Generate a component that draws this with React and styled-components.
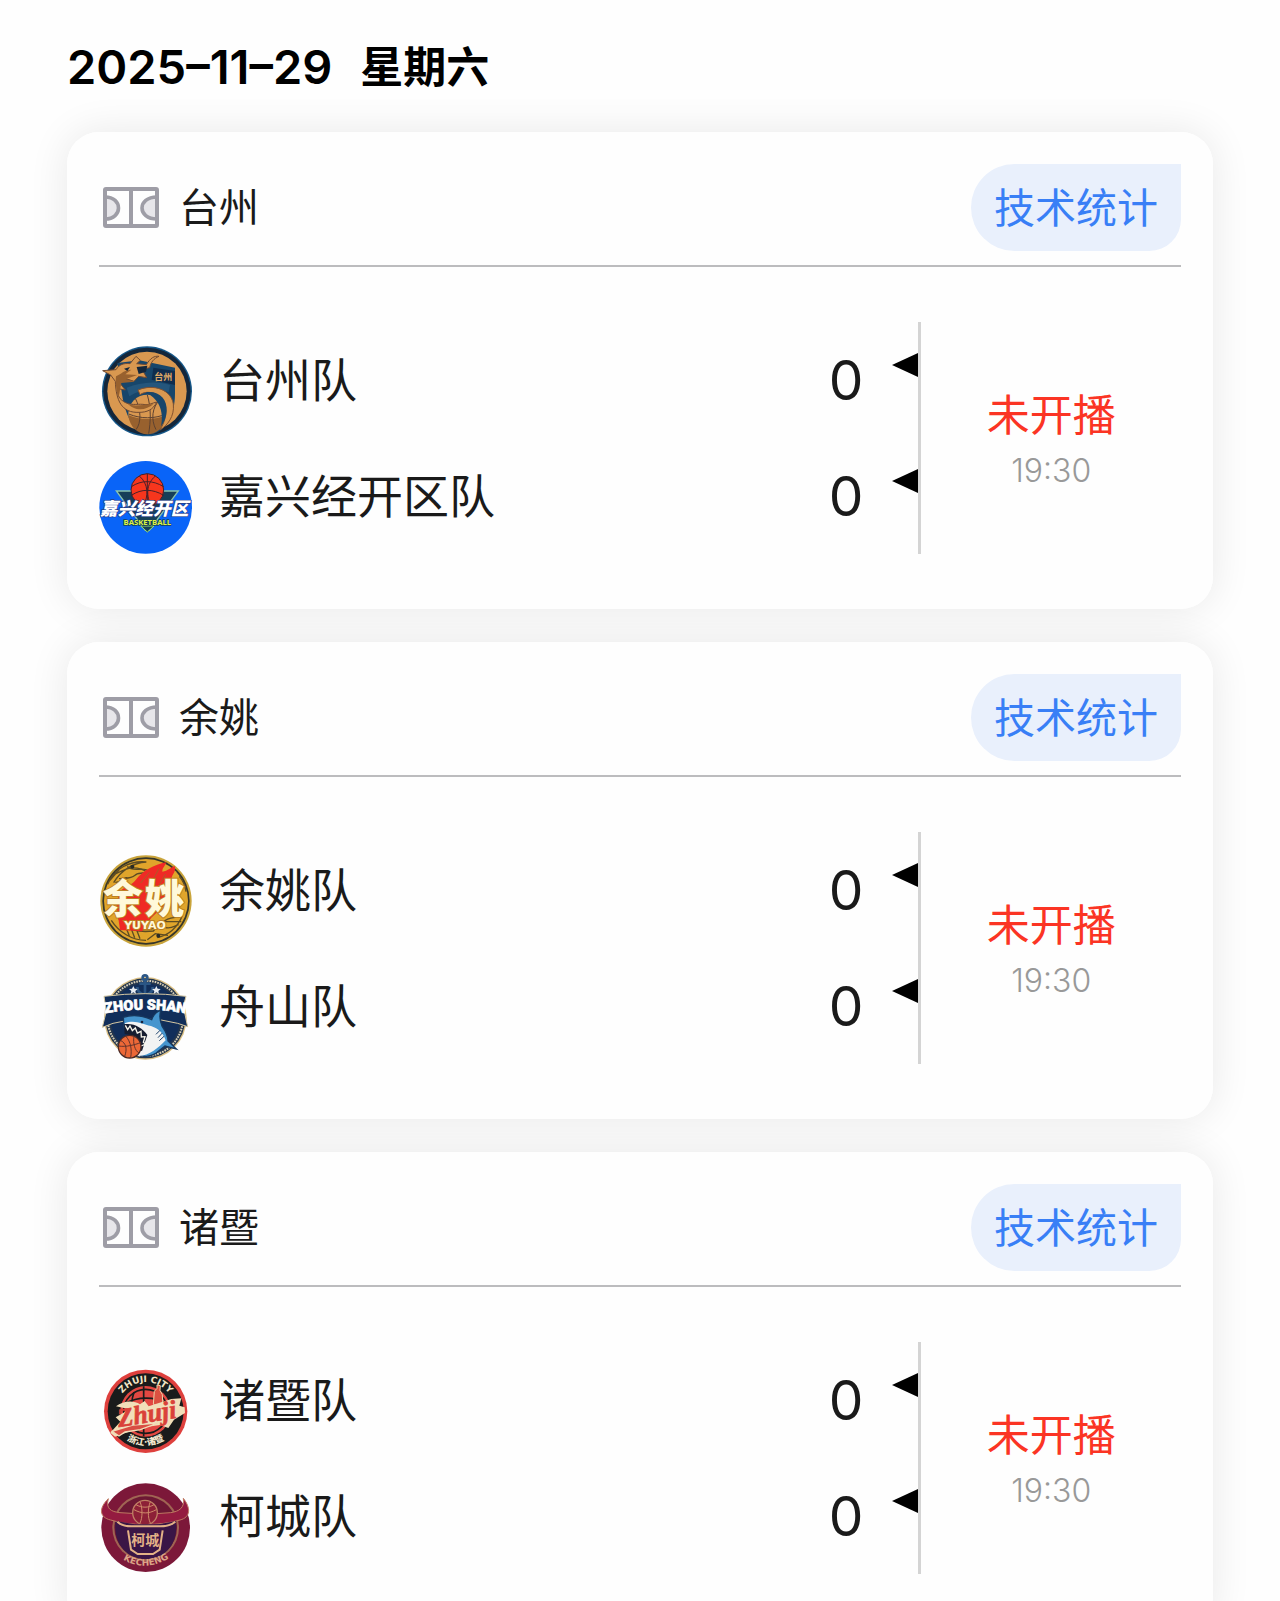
import React from 'react';
import styled, { createGlobalStyle } from 'styled-components';

const GlobalStyle = createGlobalStyle`
  * {
    box-sizing: border-box;
  }

  body {
    margin: 0;
    background: #fefefe;
    color: #1a1a1a;
    font-family: Inter, 'Noto Sans CJK SC', sans-serif;
  }
`;

const Page = styled.main`
  padding: 38px 67px 33px;
`;

const DateHeading = styled.h1`
  display: flex;
  align-items: center;
  gap: 28px;
  margin: 0 0 36px;
  color: #000;
  font-size: 43px;
  font-weight: 600;
  line-height: 58px;
`;

const Day = styled.time`
  font-size: 47px;
  font-weight: 600;
`;

const MatchList = styled.section`
  display: flex;
  flex-direction: column;
  gap: 33px;
  isolation: isolate;
`;

const Card = styled.article`
  position: relative;
  padding: 32px 32px 55px;
  border-radius: 32px;
  background: #fefefe;

  /* keeps the shadow under the neighbouring cards */
  &::before {
    content: '';
    position: absolute;
    inset: 0;
    z-index: -1;
    border-radius: inherit;
    box-shadow: 0 0 40px rgba(0, 0, 0, 0.09);
  }
`;

const CardHeader = styled.header`
  display: flex;
  align-items: center;
  padding-bottom: 14px;
  border-bottom: 2px solid #bcbcbe;
`;

const CourtIcon = styled.svg`
  width: 64px;
  height: 44px;
`;

const Venue = styled.h2`
  flex: 1;
  margin: 0 0 0 16px;
  font-size: 40px;
  font-weight: 400;
  line-height: 56px;
`;

const StatsButton = styled.button`
  height: 87px;
  padding: 0 23px 6px;
  border: 0;
  border-radius: 44px 0 32px 44px;
  background: #e9f0fc;
  color: #397ff6;
  font: inherit;
  font-size: 41px;
  cursor: pointer;
`;

const MatchBody = styled.div`
  display: flex;
  margin-top: 55px;
`;

const Teams = styled.ul`
  flex: 1;
  margin: 0;
  padding: 0;
  border-right: 3px solid #d4d4d4;
  list-style: none;
`;

const TeamRow = styled.li`
  display: flex;
  align-items: center;
  height: 116px;
`;

const Logo = styled.svg`
  align-self: flex-end;
  width: 93px;
  height: 93px;
  overflow: visible;
`;

const TeamName = styled.span`
  flex: 1;
  margin-left: 27px;
  font-size: 46px;
  line-height: 62px;
`;

const Score = styled.span`
  font-size: 55px;
  line-height: 64px;
`;

const Pointer = styled.i`
  align-self: flex-start;
  margin: 31px 0 0 29px;
  border: solid transparent;
  border-width: 12px 26px 12px 0;
  border-right-color: #000;
`;

const Status = styled.div`
  flex: 0 0 24%;
  display: flex;
  flex-direction: column;
  justify-content: center;
  align-items: center;
  padding-top: 6px;
`;

const StatusText = styled.span`
  color: #fb3424;
  font-size: 43px;
  line-height: 60px;
`;

const StartTime = styled.time`
  color: #999;
  font-size: 32px;
  font-weight: 300;
  line-height: 52px;
`;

const Court = () => (
  <CourtIcon viewBox="0 0 64 44" fill="none" stroke="#9e9da6" strokeWidth="4" aria-hidden="true">
    <path d="M6 11c18 0 18 22 0 22zM58 11c-20 0-20 22 0 22z" fill="#e7e6ea" strokeWidth="3.6" />
    <rect x="6" y="3" width="52" height="37" rx="1" />
    <path d="M32 3v37" />
  </CourtIcon>
);

const TaizhouLogo = () => (
  <Logo viewBox="27 30 279 279" aria-hidden="true">
    <circle cx="171" cy="169" r="135" fill="#155789" />
    <circle cx="171" cy="169" r="131" fill="#14263a" />
    <circle cx="171" cy="169" r="119" fill="#d99850" />
    <path d="M82 84l66-8 107 22v78c0 66-30 120-82 124-48-8-68-70-76-116z" fill="#17466b" />
    <path d="M190 98l65 10v42l-70-16z" fill="#102d4d" />
    <path d="M110 158c38-14 82-22 130-8l-4 22c-40-16-82-12-118 12z" fill="#24567c" />
    <circle cx="172" cy="236" r="57" fill="#d99850" />
    <path d="M115 240c34 16 80 16 114 0-4 40-32 58-57 58s-54-20-57-58z" fill="#98612e" />
    <g fill="none" stroke="#5d4130" strokeWidth="3">
      <path d="M116 237c36 15 78 15 112 0M172 180c12 40 10 80 4 116M136 190c18 34 18 74 2 94M210 194c-24 22-28 60-12 90" />
    </g>
    <path d="M144 165c48-20 100 0 106 42 4 38-18 64-40 78 24-40 28-88-14-108-18-8-34-6-46 2z" fill="#d99850" stroke="#85522e" strokeWidth="3" />
    <path d="M166 172c42-6 66 20 64 56-1 20-8 34-17 46 7-35 2-79-47-102z" fill="#17466b" />
    <path d="M38 107l40-3c10-16 24-20 42-18l18-22 13 12-11 10 29 3c12-20 24-27 38-25-16 7-24 17-28 34l-9 2-10 10 10 18-24-4-14 15-24-8-18 14 16 20-22-4c-4 20 5 33 23 42 20 10 42 2 58 6 14 1 22-5 35-8-10 24-31 31-52 31-54 3-70-37-72-93l-14-19z" fill="#d99850" stroke="#714a32" strokeWidth="3" />
    <path d="M78 124c18-8 24-20 46-20l-18 14 36 2-34 12 26 8-40 4-8 42c-8-18-10-44-8-62z" fill="#98612e" />
    <path d="M140 96l32-4-4 18-22 7zM102 101l18-5-8 12z" fill="#14263a" />
    <path d="M112 205c24 14 50 0 78 3-20 17-54 24-78-3z" fill="#98612e" />
    <text x="193" y="134" fill="#e1aa67" fontSize="27" fontWeight="700">台州</text>
  </Logo>
);

const JiaxingLogo = () => (
  <Logo viewBox="27 27 279 279" aria-hidden="true">
    <circle cx="167" cy="166" r="139" fill="#0964f8" />
    <path d="M79 117h186l-87 118h-12z" fill="#163f58" stroke="#8bc4ab" strokeWidth="4" />
    <circle cx="172" cy="114" r="49" fill="#f7361d" stroke="#412129" strokeWidth="3" />
    <g fill="none" stroke="#49212a" strokeWidth="3">
      <path d="M124 104c30-20 64-20 97 0M124 130c30-20 64-20 97 0M172 65v98M148 72c28 24 28 60 12 90M196 72c-28 24-28 60-12 90" />
    </g>
    <path d="M152 222l20 18 20-18z" fill="#163f58" stroke="#9be66e" strokeWidth="3" />
    <text x="172" y="219" textAnchor="middle" fill="#dff345" stroke="#163f58" strokeWidth="4" paintOrder="stroke" fontSize="23" fontWeight="700" fontFamily="'Open Sans', sans-serif">BASKETBALL</text>
    <text x="30" y="188" fill="#fff" stroke="#263d86" strokeWidth="4" paintOrder="stroke" fontSize="53" fontWeight="900" fontStyle="italic">嘉兴经开区</text>
  </Logo>
);

const YuyaoLogo = () => (
  <Logo viewBox="27 30 279 279" aria-hidden="true">
    <circle cx="168" cy="168" r="137" fill="#c9a43b" />
    <circle cx="168" cy="168" r="131" fill="#36362a" />
    <circle cx="168" cy="168" r="126" fill="#e0a52b" />
    <g fill="none" stroke="#5d4c23" strokeWidth="4">
      <path d="M53 118c20-48 68-72 116-67-38 2-76 24-98 62M76 112c16 2 24-16 36-14M68 92c30-18 64-38 108-8M64 226c22 35 62 60 104 60M86 220c18 40 70 42 104 38l26-28h58M202 278c36-8 62-34 76-68M224 247c20 6 28-4 42-8M60 106l28-32M268 94c12 14 18 32 20 46M172 284l24-18 38 5M108 248l10 24M124 252l10 26M140 255l10 26" />
      <path d="M112 64c18 20 44 0 63 13-14 14-31 2-40 14-14 13-30 7-48 10M276 212c-20 8-44 2-65 26-22 20-44 14-70 16" />
    </g>
    <circle cx="127" cy="65" r="6" fill="#292b25" />
    <circle cx="205" cy="272" r="6" fill="#292b25" />
    <path d="M94 135c14-12 31-14 43-30 22-28 54-46 92-53-5 14-12 16-12 28 16-2 28-14 37-17 6 20-13 28-9 43 14 18 3 44-11 64l-50 48-28 41-66-4-12-84z" fill="#ef2a25" />
    <path d="M152 114l26-32M180 120l27-49M208 119l19-32" fill="none" stroke="#ac5c27" strokeWidth="3" />
    <g fill="#fff9da" stroke="#bd8024" strokeWidth="6" paintOrder="stroke" fontWeight="900">
      <text x="40" y="203" fontSize="118">余</text>
      <text x="165" y="203" fontSize="118">姚</text>
      <text x="165" y="252" textAnchor="middle" fontSize="33" fontFamily="'DejaVu Sans', sans-serif">YUYAO</text>
    </g>
  </Logo>
);

const ZhoushanLogo = () => (
  <Logo viewBox="27 27 279 279" aria-hidden="true">
    <circle cx="166" cy="169" r="124" fill="#d9be83" />
    <circle cx="166" cy="169" r="120" fill="#24364d" />
    <circle cx="166" cy="169" r="113" fill="none" stroke="#d7ceb5" strokeWidth="6" strokeDasharray="5 3" />
    <circle cx="166" cy="169" r="105" fill="#112e5a" />
    <g fill="none" stroke="#2b5685" strokeWidth="8">
      <circle cx="165" cy="47" r="7" />
      <path d="M165 54v44M148 65h34M142 75c0 30 46 30 46 0" />
    </g>
    <path d="M130 72l4 8 9 1-7 6 2 9-8-5-8 5 2-9-7-6 9-1zM199 72l4 8 9 1-7 6 2 9-8-5-8 5 2-9-7-6 9-1z" fill="#e7edf2" />
    <path d="M42 103q124-16 246 0l-8 31 13 60-30-10q-96-26-194 0l-32 12 12-49z" fill="#112e5a" stroke="#d6c8a2" strokeWidth="3" />
    <path id="zhoushanArc" d="M24 158q142-30 284 0" fill="none" />
    <text fill="#fff" stroke="#fff" strokeWidth="2" fontSize="43" fontWeight="900" fontFamily="Roboto, sans-serif">
      <textPath href="#zhoushanArc" startOffset="50%" textAnchor="middle">ZHOU SHAN</textPath>
    </text>
    <path d="M100 166c28-10 59-5 85 7 5-14 14-24 27-28-5 20-2 33 4 47 14 20 18 34 18 45l25 24-34-9-20 16c-18 18-52 20-70 6l15-44c-24-4-34-20-48-32z" fill="#4595ce" stroke="#17385e" strokeWidth="4" />
    <path d="M104 184c32-12 51 3 79 8 26 9 36 22 44 43-23 23-54 52-91 46l22-48c-25-6-41-20-54-49z" fill="#f2f3f3" />
    <path d="M102 187c26-6 56 10 70 32l-16 48-19-7c10-22-3-42-33-44z" fill="#151d30" />
    <path d="M106 190l7 13 7-11 7 14 9-8 6 15 11-5 1 17 11-1-5 17 7 5-14 6" fill="none" stroke="#f8f6ec" strokeWidth="4" />
    <path d="M210 205l-12 12M217 213l-13 14M222 223l-14 13" stroke="#173d68" strokeWidth="3" />
    <circle cx="156" cy="180" r="4" fill="#172039" />
    <circle cx="119" cy="254" r="34" fill="#ec6837" stroke="#492a25" strokeWidth="4" />
    <g fill="none" stroke="#62332b" strokeWidth="3">
      <path d="M86 252c24 4 48-4 66-10M107 222c16 18 19 41 15 65M91 235c18 8 21 27 13 48M132 223c-4 20 3 44 15 50" />
    </g>
  </Logo>
);

const ZhujiLogo = () => (
  <Logo viewBox="27 14 279 279" aria-hidden="true">
    <circle cx="167" cy="153" r="125" fill="#de403d" />
    <circle cx="167" cy="153" r="114" fill="#191b1b" />
    <circle cx="167" cy="153" r="76" fill="#e24842" />
    <g fill="none" stroke="#191b1b" strokeWidth="5">
      <circle cx="167" cy="153" r="66" />
      <path d="M104 130c40-22 90-22 126 0M132 96c-14 42-10 88 13 118M161 78v150M104 178c42 20 92 20 126 0" />
    </g>
    <path id="zhujiArc" d="M79 153a88 88 0 0 1 176 0" fill="none" />
    <text fill="#f4e5c5" fontSize="27" fontWeight="700" fontFamily="'DejaVu Sans', sans-serif">
      <textPath href="#zhujiArc" startOffset="50%" textAnchor="middle">ZHUJI CITY</textPath>
    </text>
    <path d="M190 132l3-39 8-9v-10l10 2-1 14 7 13 2 42z" fill="#db5141" stroke="#eed1a6" strokeWidth="3" />
    <path d="M78 138c22-18 54-18 72-6l14-10 12 16 68-22 30-2-6 22 16 5 1 17-33 20-17 25-25-9-62 9-73 26-14-12 30-33-14-13 42-24z" fill="#f1dfb9" />
    <path d="M66 213l62-19 76-6-53 20-46 7-18 12z" fill="#d84e43" stroke="#f1dfb9" strokeWidth="4" />
    <g transform="rotate(-9 166 164)">
      <text x="82" y="187" fill="#da4239" stroke="#da4239" strokeWidth="2" fontSize="78" fontWeight="700" fontStyle="italic" fontFamily="'Liberation Serif', serif">Zhuji</text>
    </g>
    <path id="zhujiCityArc" d="M84 220q83 70 166 0" fill="none" />
    <text fill="#f3e8cf" fontSize="27" fontWeight="900">
      <textPath href="#zhujiCityArc" startOffset="50%" textAnchor="middle">浙江·诸暨</textPath>
    </text>
  </Logo>
);

const KechengLogo = () => (
  <Logo viewBox="27 17 279 279" aria-hidden="true">
    <circle cx="167" cy="157" r="133" fill="#7c1839" />
    <circle cx="167" cy="157" r="100" fill="#a06553" />
    <circle cx="167" cy="157" r="94" fill="#6d1834" />
    <path d="M77 133q90-25 180 0c10 70-28 116-90 118-61-1-99-50-90-118z" fill="#3a1646" />
    <path d="M55 70c-8 30 7 39 35 42 54 4 99 5 151 0 27-3 44-16 39-43 23 29 22 57-10 65-58 18-152 18-208 0-35-8-36-36-7-64z" fill="#941b40" stroke="#bf7961" strokeWidth="3" />
    <circle cx="165" cy="112" r="37" fill="#8d2037" stroke="#bf8064" strokeWidth="4" />
    <g fill="none" stroke="#cf8a6a" strokeWidth="3">
      <path d="M132 103c24 13 44 13 67 0M138 88c16 10 38 10 54 0M150 79c8 20 8 48 0 64M181 79c-8 20-8 48 0 64" />
    </g>
    <path d="M80 137l53 10h74l52-10c-8 22-28 26-48 26l-8 52-28 17h-20l-29-17-6-52c-24 0-36-8-40-26z" fill="#3a1646" />
    <path d="M82 139q16 15 46 14h78q32 1 50-14M114 165l9 58 20 13h46l20-13 9-58" fill="none" stroke="#e3b286" strokeWidth="6" />
    <text x="166" y="210" textAnchor="middle" fill="#e3b286" fontSize="42" fontWeight="700">柯城</text>
    <path id="kechengArc" d="M68 230q96 84 200-4" fill="none" />
    <text fill="#dda487" fontSize="27" fontWeight="700" fontFamily="'DejaVu Sans', sans-serif">
      <textPath href="#kechengArc" startOffset="50%" textAnchor="middle">KECHENG</textPath>
    </text>
  </Logo>
);

const matches = [
  {
    venue: '台州',
    teams: [
      { name: '台州队', score: 0, Emblem: TaizhouLogo },
      { name: '嘉兴经开区队', score: 0, Emblem: JiaxingLogo },
    ],
  },
  {
    venue: '余姚',
    teams: [
      { name: '余姚队', score: 0, Emblem: YuyaoLogo },
      { name: '舟山队', score: 0, Emblem: ZhoushanLogo },
    ],
  },
  {
    venue: '诸暨',
    teams: [
      { name: '诸暨队', score: 0, Emblem: ZhujiLogo },
      { name: '柯城队', score: 0, Emblem: KechengLogo },
    ],
  },
];

const MatchCard = ({ venue, teams }) => (
  <Card>
    <CardHeader>
      <Court />
      <Venue>{venue}</Venue>
      <StatsButton type="button">技术统计</StatsButton>
    </CardHeader>
    <MatchBody>
      <Teams>
        {teams.map(({ name, score, Emblem }) => (
          <TeamRow key={name}>
            <Emblem />
            <TeamName>{name}</TeamName>
            <Score>{score}</Score>
            <Pointer />
          </TeamRow>
        ))}
      </Teams>
      <Status>
        <StatusText>未开播</StatusText>
        <StartTime dateTime="2025-11-29T19:30">19:30</StartTime>
      </Status>
    </MatchBody>
  </Card>
);

const App = () => (
  <>
    <GlobalStyle />
    <Page lang="zh-CN">
      <DateHeading>
        <Day dateTime="2025-11-29">2025–11–29</Day>
        <span>星期六</span>
      </DateHeading>
      <MatchList>
        {matches.map(match => (
          <MatchCard key={match.venue} {...match} />
        ))}
      </MatchList>
    </Page>
  </>
);

export default App;
